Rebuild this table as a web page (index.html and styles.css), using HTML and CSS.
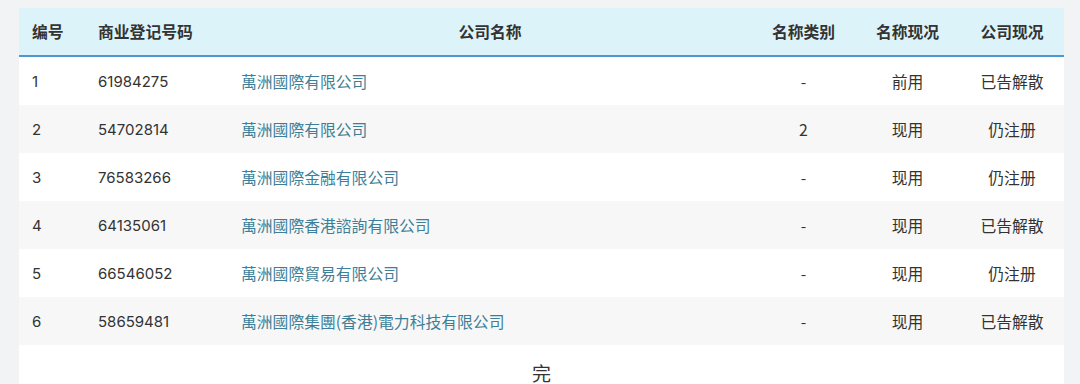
FILE: index.html
```html
<!DOCTYPE html>
<html lang="zh">
<head>
<meta charset="utf-8">
<link rel="stylesheet" href="styles.css">
</head>
<body>
<div class="page">
  <table class="list">
    <colgroup>
      <col class="c1"><col class="c2"><col class="c3"><col class="c4"><col class="c5"><col class="c6">
    </colgroup>
    <thead>
      <tr>
        <th class="left">编号</th>
        <th class="left">商业登记号码</th>
        <th>公司名称</th>
        <th>名称类别</th>
        <th>名称现况</th>
        <th>公司现况</th>
      </tr>
    </thead>
    <tbody>
      <tr><td>1</td><td>61984275</td><td><a class="name">萬洲國際有限公司</a></td><td class="ctr">-</td><td class="ctr">前用</td><td class="ctr">已告解散</td></tr>
      <tr><td>2</td><td>54702814</td><td><a class="name">萬洲國際有限公司</a></td><td class="ctr">2</td><td class="ctr">现用</td><td class="ctr">仍注册</td></tr>
      <tr><td>3</td><td>76583266</td><td><a class="name">萬洲國際金融有限公司</a></td><td class="ctr">-</td><td class="ctr">现用</td><td class="ctr">仍注册</td></tr>
      <tr><td>4</td><td>64135061</td><td><a class="name">萬洲國際香港諮詢有限公司</a></td><td class="ctr">-</td><td class="ctr">现用</td><td class="ctr">已告解散</td></tr>
      <tr><td>5</td><td>66546052</td><td><a class="name">萬洲國際貿易有限公司</a></td><td class="ctr">-</td><td class="ctr">现用</td><td class="ctr">仍注册</td></tr>
      <tr><td>6</td><td>58659481</td><td><a class="name">萬洲國際集團(香港)電力科技有限公司</a></td><td class="ctr">-</td><td class="ctr">现用</td><td class="ctr">已告解散</td></tr>
    </tbody>
  </table>
  <div class="end">完</div>
</div>
</body>
</html>
```
FILE: styles.css
```css
html, body {
  margin: 0;
  padding: 0;
  background: #f2f3f5;
  font-family: Inter, "Noto Sans CJK SC", sans-serif;
  color: #333;
  overflow: hidden;
}
.page {
  padding: 8px 16px 0 19px;
}
.list {
  width: 1045px;
  border-collapse: collapse;
  table-layout: fixed;
  font-size: 15px;
}
.c1 { width: 66px; }
.c2 { width: 143px; }
.c3 { width: 524px; }
.c4 { width: 103px; }
.c5 { width: 105px; }
.c6 { width: 104px; }
thead tr {
  background: #ddf3fa;
  border-bottom: 2px solid #4a9ad0;
}
th {
  height: 47px;
  padding: 0 13px;
  font-size: 15.8px;
  font-weight: 600;
  color: #333;
  text-align: center;
  font-family: "Noto Sans CJK SC", sans-serif;
}
th.left { text-align: left; }
td {
  height: 48px;
  padding: 0 13px;
  color: #333;
}
td.ctr {
  text-align: center;
  font-size: 15.8px;
  font-family: "Noto Sans CJK SC", sans-serif;
}
tbody tr:nth-child(odd) { background: #ffffff; }
tbody tr:nth-child(even) { background: #f7f7f7; }
.name {
  color: #3d7f99;
  font-size: 15.8px;
  font-family: "Noto Sans CJK TC", sans-serif;
  text-decoration: none;
}
.end {
  width: 1045px;
  height: 56px;
  background: #fff;
  text-align: center;
  font-size: 19px;
  line-height: 56px;
  color: #333;
  font-family: "Noto Sans CJK SC", sans-serif;
}
```
